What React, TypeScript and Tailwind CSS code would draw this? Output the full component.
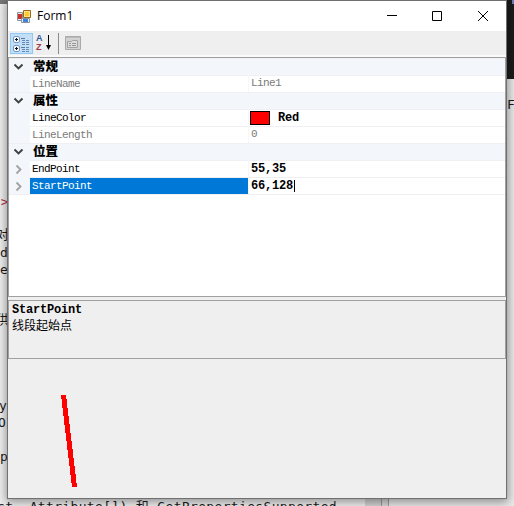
import type { ReactNode } from 'react';

const line = 'border-t border-[#f0f0f4]';

function Chevron({ open }: { open?: boolean }) {
  return (
    <svg className="h-4 w-[21px] shrink-0" viewBox="0 0 21 16" fill="none" strokeWidth="1.9">
      {open ? <path d="M5.5 5.5 9.5 9.5 13.5 5.5" stroke="#404040" /> : <path d="M7.5 4.5 11.5 8.5 7.5 12.5" stroke="#a3a3a3" />}
    </svg>
  );
}

function Category({ name }: { name: string }) {
  return (
    <div className={`flex h-[17px] ${line} bg-[#f3f6fb]`}>
      <Chevron open />
      <span className="pl-[3px] font-['Noto_Sans_CJK_SC',sans-serif] text-[12.5px] leading-[14px] font-black">{name}</span>
    </div>
  );
}

type RowProps = { name: string; children: ReactNode; muted?: boolean; expandable?: boolean; selected?: boolean };

function Row({ name, children, muted, expandable, selected }: RowProps) {
  return (
    <div className="flex h-[17px] bg-[#f3f6fb]">
      <div className="w-[21px] shrink-0 pt-px">{expandable && <Chevron />}</div>
      <div className={`w-[218px] shrink-0 ${line} pl-[2px] text-[11px] leading-[16px] tracking-[-0.6px] ${selected ? 'bg-[#0078d7] bg-clip-padding text-white' : muted ? 'bg-white text-[#7a7a7a]' : 'bg-white text-black'}`}>{name}</div>
      <div className={`ml-px flex grow items-center ${line} bg-white pl-[2px] ${muted ? 'pb-[2px] text-[11px] leading-[14px] tracking-[-0.6px] text-[#7a7a7a]' : 'text-[12px] leading-[15px] font-bold tracking-[-0.2px]'}`}>{children}</div>
    </div>
  );
}

function AppIcon() {
  return (
    <svg className="ml-[9px] h-[15px] w-[14px]" viewBox="0 0 14 15">
      <path d="M.5 3.5h5v8h-5z" fill="#e8ecf2" stroke="#8b929b" />
      <path d="M1 5h4v5H1z" fill="#c83228" />
      <path d="M4.5 9.5h8v4h-8z" fill="#e9f2ff" stroke="#8b929b" />
      <path d="M6 10h5v3H6z" fill="#3f83df" />
      <path d="M6.5 1.5h7v7h-7z" fill="#ffe18a" stroke="#93681d" />
      <path d="M8 3h4v4H8z" fill="#ffc928" />
    </svg>
  );
}

function Toolbar() {
  return (
    <div className="flex h-6 items-center bg-[#efefef] pl-[2px]">
      <div className="flex h-[21px] w-[23px] items-center justify-center border border-[#90c8f6] bg-[#c3dff5]">
        <svg className="h-[17px] w-[19px] shrink-0" viewBox="0 0 19 17" fill="none">
          <rect x="1.5" y="1.5" width="6" height="6" rx="1.5" fill="#f5faff" stroke="#7598c8" />
          <rect x="1.5" y="10.5" width="6" height="6" rx="1.5" fill="#f5faff" stroke="#7598c8" />
          <path d="M3 4.5h3M4.5 3v3M3 13.5h3M4.5 12v3" stroke="#111" />
          <path d="M9 3.5h4M9 12.5h4" stroke="#5c759c" />
          <path d="M10 5.5h3M14 5.5h3M10 7.5h3M14 7.5h3M10 9.5h3M14 9.5h3M14 12.5h3M10 14.5h3M14 14.5h3M10 16.5h3M14 16.5h3" stroke="#6688bb" />
        </svg>
      </div>
      <div className="ml-[3px] flex h-[18px] w-[17px]">
        <div className="w-2 font-['Liberation_Sans',sans-serif] text-[9px] leading-[9px] font-bold">
          <div className="text-[#2d59a0]">A</div><div className="text-[#a03a48]">Z</div>
        </div>
        <svg className="h-[17px] w-[8px]" viewBox="0 0 8 17"><path d="M4.5 1v13" stroke="#000" /><path d="M2 11h5l-2.5 5Z" /></svg>
      </div>
      <div className="ml-[5px] h-[21px] w-px bg-[#8b8b8b]" />
      <svg className="ml-[6px] h-[16px] w-[17px]" viewBox="0 0 17 16" fill="none">
        <path d="M.5 1.5h15v13H.5z" fill="#d2d2d2" stroke="#aaa" />
        <path d="M1 2.5h14" stroke="#bababa" />
        <path d="M2.5 6.5h4l1-1h5v7h-10z" fill="#ddd" stroke="#a2a2a2" />
        <path d="M4 8.5h2M7 8.5h4M4 10.5h2M7 10.5h4" stroke="#979797" />
      </svg>
    </div>
  );
}

function CodeBackdrop() {
  const code = "absolute whitespace-pre font-['DejaVu_Sans_Mono','Noto_Sans_CJK_SC',monospace] text-[13px] leading-[16px] text-[#1b1b1b]";
  return (
    <div className="absolute inset-0 bg-[#efefef]">
      <div className="absolute top-0 left-0 h-1 w-[409px] bg-[#777]" />
      <div className="absolute top-0 right-0 h-[79px] w-[106px] bg-[#1b1b1b]" />
      <div className="absolute top-0 right-0 h-[4px] w-[2px] bg-[#6c7eb5]" />
      <div className="absolute top-[79px] right-0 bottom-0 w-[149px] bg-[#e9e9e9]" />
      <div className="absolute bottom-0 left-[365px] h-2 w-[17px] bg-[#d3d3d3]" />
      <div className="absolute bottom-0 left-[381px] h-2 w-[8px] border-x border-[#999] bg-[#d8d8d8]" />
      <div className={`${code} top-[194px] left-[-7px] text-[#b43245]`}>"&gt;</div>
      <div className={`${code} top-[227px] left-[-4px]`}>对</div>
      <div className={`${code} top-[245px] left-0`}>d</div>
      <div className={`${code} top-[262px] left-0`}>e</div>
      <div className={`${code} top-[312px] left-[-4px]`}>供</div>
      <div className={`${code} top-[398px] left-[-1px]`}>yp</div>
      <div className={`${code} top-[415px] left-[-2px]`}>OI</div>
      <div className={`${code} top-[449px] left-0`}>p</div>
      <div className={`${code} top-[97px] left-[507px]`}>F</div>
      <div className={`${code} top-[499px] left-[-3px] tracking-[0.34px]`}>ct, Attribute[]) 和 GetPropertiesSupported</div>
    </div>
  );
}

export default function App() {
  return (
    <div className="relative h-[506px] w-[514px] overflow-hidden">
      <CodeBackdrop />
      <div className="absolute top-0 left-[7px] flex h-[499px] w-[500px] flex-col border border-[#707070] bg-[#efefef] font-['Liberation_Mono','Noto_Sans_CJK_SC',monospace] text-black shadow-[0_2px_9px_1px_rgba(0,0,0,0.4)]">
        <header className="flex h-[30px] shrink-0 items-center bg-white">
          <AppIcon />
          <span className="ml-[6px] font-['Open_Sans',sans-serif] text-[12px]">Form1</span>
          <svg className="ml-auto h-3 w-3" viewBox="0 0 12 12" stroke="#000"><path d="M1 5.5h10" /></svg>
          <svg className="ml-[33px] h-3 w-3" viewBox="0 0 12 12" fill="none" stroke="#000"><path d="M1.5 1.5h9v9h-9z" /></svg>
          <svg className="mr-[17px] ml-[34px] h-3 w-3" viewBox="0 0 12 12" stroke="#000"><path d="m1 1 10 10M11 1 1 11" /></svg>
        </header>
        <Toolbar />
        <div className="h-[2px] shrink-0 bg-[#fafafa]" />
        <main className="h-[240px] shrink-0 border border-[#a0a0a0] bg-white">
          <Category name="常规" />
          <Row name="LineName" muted>Line1</Row>
          <Category name="属性" />
          <Row name="LineColor"><i className="ml-[-1px] h-[14px] w-5 border border-black bg-[#f00]" /><span className="ml-2">Red</span></Row>
          <Row name="LineLength" muted>0</Row>
          <Category name="位置" />
          <Row name="EndPoint" expandable>55,35</Row>
          <Row name="StartPoint" expandable selected>66,128<i className="ml-px h-3 w-px bg-black" /></Row>
          <div className="h-px bg-[#f0f0f4]" />
        </main>
        <section className="mt-[3px] h-[59px] shrink-0 border border-[#a0a0a0] pt-[2px] pl-[3px]">
          <div className="text-[12px] leading-[14px] font-bold tracking-[-0.2px]">StartPoint</div>
          <div className="font-['Noto_Sans_CJK_SC',sans-serif] text-[12px] leading-[16px]">线段起始点</div>
        </section>
        <svg className="h-[139px] w-full" viewBox="0 0 498 139" shapeRendering="crispEdges"><path d="M55.5 36 66.5 128" stroke="#f00" strokeWidth="5" /></svg>
      </div>
    </div>
  );
}
